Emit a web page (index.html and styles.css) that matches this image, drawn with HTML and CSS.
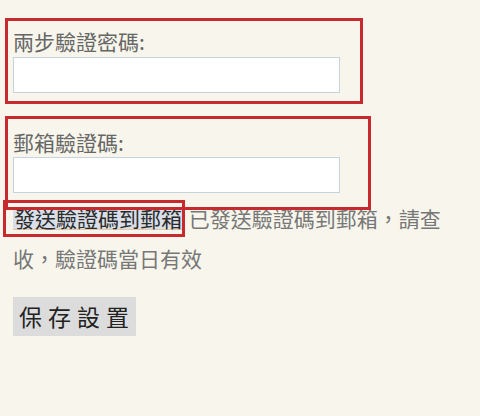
FILE: index.html
```html
<!DOCTYPE html>
<html lang="zh-Hant">
<head>
<meta charset="utf-8">
<link rel="stylesheet" href="styles.css">
</head>
<body>
<div class="page">
  <form class="form">
    <label class="label label-first">兩步驗證密碼:</label>
    <input class="field" type="text">
    <label class="label label-second">郵箱驗證碼:</label>
    <input class="field field-second" type="text">
    <p class="note"><span class="send-btn">發送驗證碼到郵箱</span> 已發送驗證碼到郵箱，請查收，驗證碼當日有效</p>
    <button class="save-btn" type="button">保存設置</button>
  </form>
  <div class="mark mark-one"></div>
  <div class="mark mark-two"></div>
  <div class="mark mark-three"></div>
</div>
</body>
</html>
```
FILE: styles.css
```css
html, body {
  margin: 0;
  padding: 0;
  background: #f8f6ec;
}
.page {
  position: relative;
  width: 480px;
  height: 416px;
  overflow: hidden;
  font-family: "Noto Sans CJK TC", "Noto Sans", sans-serif;
}
.form {
  display: flex;
  flex-direction: column;
  align-items: flex-start;
  padding: 27px 20px 0 13px;
}
.label {
  display: block;
  font-size: 21px;
  line-height: 28px;
  color: #666;
}
.label-second {
  margin-top: 35px;
}
.field {
  box-sizing: border-box;
  width: 327px;
  height: 36px;
  margin: 2px 0 0;
  padding: 0 4px;
  border: 1px solid #c5d3dc;
  background: #fff;
  outline: none;
}
.field-second {
  margin-top: 1px;
}
.note {
  margin: 5px 0 0;
  font-size: 21px;
  line-height: 40px;
  color: #777;
  width: 447px;
}
.send-btn {
  display: inline-block;
  box-sizing: border-box;
  line-height: 22px;
  padding: 0 1px;
  background: #d9dee8;
  border-right: 1px solid #e6c8a6;
  border-bottom: 1px solid #e6c8a6;
  color: #2a2a2a;
}
.save-btn {
  margin-top: 19px;
  height: 39px;
  padding: 0 1px 0 6px;
  border: none;
  background: #dcdcdc;
  color: #222;
  font-family: inherit;
  font-size: 23px;
  line-height: 39px;
  letter-spacing: 6px;
}
.mark {
  position: absolute;
  box-sizing: border-box;
  border: 3px solid #c62a2c;
  pointer-events: none;
}
.mark-one {
  left: 5px;
  top: 18px;
  width: 358px;
  height: 86px;
}
.mark-two {
  left: 5px;
  top: 116px;
  width: 366px;
  height: 94px;
}
.mark-three {
  left: 3px;
  top: 200px;
  width: 182px;
  height: 37px;
}
```
